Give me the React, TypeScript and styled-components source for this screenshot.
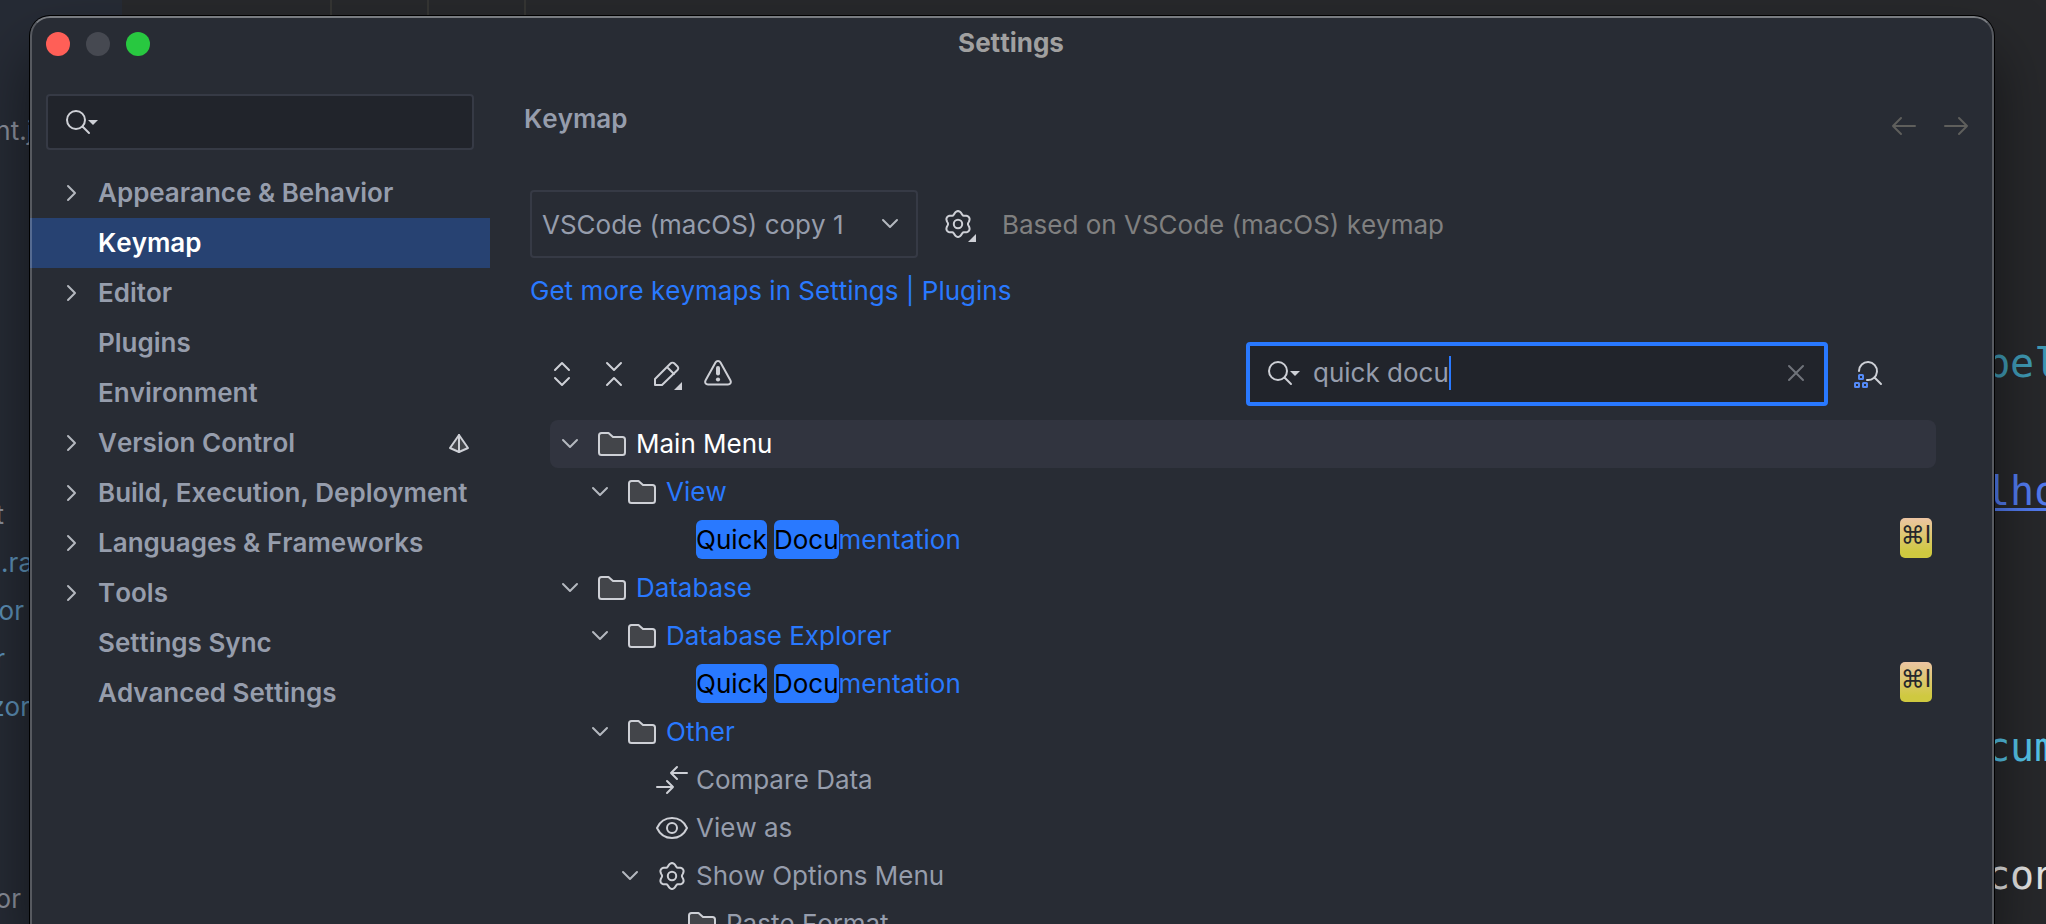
import React from "react";
import styled, { createGlobalStyle } from "styled-components";

const GlobalStyle = createGlobalStyle`
  *, *::before, *::after { box-sizing: border-box; }
  body {
    margin: 0;
    background: #26282b;
    font-family: Inter, "Liberation Sans", sans-serif;
    font-optical-sizing: none;
    font-kerning: none;
    font-size: 26px;
    line-height: 32px;
  }
  button, input, select { font: inherit; color: inherit; font-kerning: none; }
`;

const color = {
  window: "#282c34",
  field: "#21242b",
  border: "#363a45",
  text: "#969dac",
  muted: "#808080",
  icon: "#ced0d6",
  accent: "#2979ff",
};

/* ---------- Desktop behind the dialog ---------- */

const Desktop = styled.div`
  position: relative;
  height: 100vh;
  overflow: hidden;
  display: flex;
`;

const ProjectPane = styled.div`
  width: 122px;
  padding-top: 107px;
  background: #262b35;
`;

const FileRow = styled.div<{ $end: number; $blue?: boolean }>`
  display: flex;
  justify-content: flex-end;
  width: ${(p) => p.$end}px;
  height: 48px;
  line-height: 48px;
  white-space: nowrap;
  color: ${(p) => (p.$blue ? "#5c8fb6" : "#8b909c")};
`;

const EditorPane = styled.div`
  flex: 1;
  display: flex;
  justify-content: space-between;
  background: #27282b;
`;

const Guides = styled.div`
  display: flex;
  padding-left: 113px;
`;

const Guide = styled.div`
  width: 97px;
  border-right: 2px solid #353533;
`;

const Code = styled.div`
  width: 60px;
  padding-top: 11px;
  overflow: hidden;
  font-family: "DejaVu Sans Mono", monospace;
  font-size: 40px;
  line-height: 64px;
`;

const CodeLine = styled.div<{ $color?: string; $link?: boolean }>`
  height: 64px;
  white-space: pre;
  color: ${(p) => p.$color ?? "#e4e4e4"};
  text-decoration: ${(p) => (p.$link ? "underline 3px" : "none")};
  text-underline-offset: 3px;
`;

/* ---------- Dialog ---------- */

const Dialog = styled.section`
  position: absolute;
  inset: 16px 52px 0 30px;
  display: flex;
  flex-direction: column;
  overflow: hidden;
  border-radius: 20px 20px 0 0;
  background: ${color.window};
  color: ${color.text};

  &::after {
    content: "";
    position: absolute;
    inset: 0;
    border: 2px solid rgba(255, 255, 255, 0.22);
    border-top-color: rgba(255, 255, 255, 0.38);
    border-bottom: 0;
    border-radius: inherit;
    pointer-events: none;
  }
`;

const DialogShadow = styled.div`
  position: absolute;
  inset: 16px 52px 0 30px;
  border-radius: 20px 20px 0 0;
  box-shadow: 0 0 0 1px #000, 0 36px 60px rgba(0, 0, 0, 0.5);
`;

const TitleBar = styled.header`
  display: grid;
  grid-template-columns: 1fr auto 1fr;
  align-items: center;
  height: 56px;
  flex: none;
  padding: 0 18px 0 16px;
`;

const Lights = styled.div`
  display: flex;
  gap: 16px;
`;

const Light = styled.button<{ $color: string }>`
  width: 24px;
  height: 24px;
  padding: 0;
  border: 0;
  border-radius: 50%;
  background: ${(p) => p.$color};
`;

const Title = styled.h1`
  margin: 0;
  padding-bottom: 2px;
  font-size: 26px;
  font-weight: 700;
  color: #a0a0a0;
`;

const Body = styled.div`
  display: flex;
  flex: 1;
  min-height: 0;
`;

const Sidebar = styled.nav`
  width: 460px;
  flex: none;
  padding-top: 22px;
`;

const SideSearch = styled.label`
  display: flex;
  align-items: center;
  height: 56px;
  margin: 0 16px 18px;
  padding: 0 16px;
  border: 2px solid ${color.border};
  border-radius: 4px;
  background: ${color.field};
`;

const SideInput = styled.input`
  flex: 1;
  min-width: 0;
  border: 0;
  outline: 0;
  background: none;
`;

const SideItem = styled.a<{ $active?: boolean }>`
  display: flex;
  align-items: center;
  height: 50px;
  padding: 0 15px 1px 18px;
  font-weight: 600;
  text-decoration: none;
  white-space: nowrap;
  color: ${(p) => (p.$active ? "#ffffff" : color.text)};
  background: ${(p) => (p.$active ? "#274272" : "none")};
`;

const SideLabel = styled.span`
  flex: 1;
`;

const Slot = styled.span`
  display: flex;
  justify-content: center;
  flex: none;
  width: 32px;
`;

const SideSlot = styled(Slot)`
  width: 44px;
  margin-right: 6px;
`;

const Main = styled.main`
  flex: 1;
  min-width: 0;
  padding: 28px 0 0 34px;
`;

const HeadRow = styled.div`
  display: flex;
  align-items: flex-start;
  justify-content: space-between;
  height: 90px;
  padding-right: 22px;
`;

const Heading = styled.h2`
  margin: 0;
  padding-top: 3px;
  font-size: 26px;
  font-weight: 600;
`;

const NavButtons = styled.div`
  display: flex;
  gap: 20px;
  padding-top: 10px;
`;

const IconButton = styled.button`
  display: flex;
  padding: 0;
  border: 0;
  background: none;

  svg {
    overflow: visible;
  }
`;

const SchemeRow = styled.div`
  display: flex;
  align-items: center;
  gap: 24px;
  padding-left: 6px;
`;

const SchemeBox = styled.div`
  display: grid;
  grid-template-columns: 1fr 56px;
  align-items: center;
  width: 388px;
  height: 68px;

  svg {
    grid-area: 1 / 2;
    justify-self: center;
    pointer-events: none;
  }
`;

const SchemeSelect = styled.select`
  grid-area: 1 / 1 / 2 / 3;
  height: 68px;
  padding: 2px 56px 0 10px;
  border: 2px solid ${color.border};
  border-radius: 4px;
  appearance: none;
  outline: 0;
  background: ${color.window};
`;

const BasedOn = styled.span`
  padding: 2px 0 0 4px;
  color: ${color.muted};
`;

const PluginLink = styled.a`
  display: block;
  width: max-content;
  margin: 17px 0 35px 6px;
  color: ${color.accent};
  text-decoration: none;
`;

const Toolbar = styled.div`
  display: flex;
  align-items: center;
  gap: 20px;
  padding: 0 110px 0 22px;
`;

const Finder = styled.label`
  display: flex;
  align-items: center;
  width: 582px;
  height: 64px;
  margin: 0 4px 0 auto;
  padding: 0 12px 2px 16px;
  border: 4px solid ${color.accent};
  border-radius: 4px;
  background: ${color.field};
`;

const FinderInput = styled.input`
  field-sizing: content;
  margin-left: 11px;
  padding: 0;
  border: 0;
  outline: 0;
  background: none;
`;

const Caret = styled.span`
  width: 2px;
  height: 34px;
  margin-right: auto;
  background: ${color.accent};
`;

const Tree = styled.ul`
  margin: 14px 58px 0 26px;
  padding: 0;
  list-style: none;
`;

const TreeRow = styled.li<{ $level: number; $active?: boolean; $tone?: string }>`
  display: flex;
  align-items: center;
  height: 48px;
  padding: 0 4px 0 ${(p) => 4 + p.$level * 30}px;
  border-radius: 8px;
  white-space: pre;
  color: ${(p) => p.$tone ?? color.text};
  background: ${(p) => (p.$active ? "#31343f" : "none")};
`;

const IconSlot = styled(Slot)`
  margin: 0 8px 0 10px;
`;

const Label = styled.span`
  flex: 1;
`;

const Hit = styled.mark`
  padding: 4px 0;
  border-radius: 6px;
  color: #000;
  background: ${color.accent};
`;

const Shortcut = styled.kbd`
  align-self: flex-start;
  width: 32px;
  height: 40px;
  margin-top: 2px;
  border-radius: 5px;
  text-align: center;
  font-family: Inter, "DejaVu Sans", sans-serif;
  font-size: 24px;
  line-height: 34px;
  color: #26282b;
  background: linear-gradient(#ecc5a3, #cfc940 85%);
`;

/* ---------- Icons ---------- */

type IconProps = { w?: number; h?: number; stroke?: string; children: React.ReactNode };

const Icon = ({ w = 32, h = 32, stroke = color.icon, children }: IconProps) => (
  <svg
    width={w}
    height={h}
    viewBox={`0 0 ${w} ${h}`}
    fill="none"
    stroke={stroke}
    strokeWidth="2"
    strokeLinecap="round"
    strokeLinejoin="round"
    aria-hidden="true"
  >
    {children}
  </svg>
);

const gearPath =
  "M" +
  Array.from({ length: 72 }, (_, i) => {
    const a = (i / 72) * Math.PI * 2;
    const wave = Math.cos(6 * a);
    const r = 11.5 + 1.5 * wave - 0.1 * Math.cos(12 * a);
    return `${(16 + r * Math.sin(a)).toFixed(2)} ${(16 - r * Math.cos(a)).toFixed(2)}`;
  }).join("L") +
  "Z";

const MenuCorner = () => <path d="M34 26V34H26Z" fill={color.icon} stroke="none" />;

const Gear = ({ menu = false }: { menu?: boolean }) => (
  <Icon>
    <path d={gearPath} />
    <circle cx="16" cy="16" r="4.200" />
    {menu && <MenuCorner />}
  </Icon>
);
const SearchMenu = () => (
  <Icon w={36}>
    <circle cx="12" cy="14" r="9" />
    <path d="M18.500 20.500L25 27" />
    <path d="M24 14H34L29 19Z" fill={color.icon} stroke="none" />
  </Icon>
);
const ChevronRight = () => (
  <Icon stroke="#b4b8bf">
    <path d="M14 9L21 16L14 23" />
  </Icon>
);
const ChevronDown = () => (
  <Icon stroke="#b4b8bf">
    <path d="M9 12L16 19L23 12" />
  </Icon>
);
const Folder = () => (
  <Icon>
    <path
      d="M3 7.500C3 6 4 5 5.500 5H12.500L17 9H26.500C28 9 29 10 29 11.500V24.500C29 26 28 27 26.500 27H5.500C4 27 3 26 3 24.500Z"
      fill="#43454a"
    />
  </Icon>
);
const ExpandAll = () => (
  <Icon>
    <path d="M9 12L16 5L23 12M9 20L16 27L23 20" />
  </Icon>
);
const CollapseAll = () => (
  <Icon>
    <path d="M9 5L16 12L23 5M9 27L16 20L23 27" />
  </Icon>
);
const Pencil = () => (
  <Icon>
    <path d="M5 27V21L20.500 5.500C21.500 4.500 23.500 4.500 24.500 5.500L27.500 8.500C28.500 9.500 28.500 11 27.500 12L12 27ZM17 9L24 16" />
    <path d="M32 24V32H24Z" fill={color.icon} stroke="none" />
  </Icon>
);
const Warning = () => (
  <Icon>
    <path d="M13.500 4.500C14.600 2.500 17.400 2.500 18.500 4.500L28.500 22.500C29.500 24.500 28.300 26.500 26 26.500H6C3.700 26.500 2.500 24.500 3.500 22.500Z" />
    <path d="M16 10V15.500" strokeWidth="4" />
    <circle cx="16" cy="21.500" r="2.100" fill={color.icon} stroke="none" />
  </Icon>
);
const Close = () => (
  <Icon stroke="#6f737a">
    <path d="M9 9L23 23M23 9L9 23" />
  </Icon>
);
const FindShortcut = () => (
  <Icon>
    <path d="M7 13A9 9 0 1 1 15 22M22.500 19.500L29 26" />
    <g stroke="#548af7" strokeLinejoin="miter">
      <rect x="7" y="17" width="4" height="4" rx="0.500" />
      <rect x="3" y="25" width="4" height="4" rx="0.500" />
      <rect x="11" y="25" width="4" height="4" rx="0.500" />
    </g>
  </Icon>
);
const ArrowLeft = () => (
  <Icon stroke="#5f5f5c">
    <path d="M27 16H5M13 8L5 16L13 24" />
  </Icon>
);
const ArrowRight = () => (
  <Icon stroke="#5f5f5c">
    <path d="M5 16H27M19 8L27 16L19 24" />
  </Icon>
);
const Diff = () => (
  <Icon>
    <path d="M31 9H15M21 3L15 9L21 15M1 23H17M11 17L17 23L11 29" />
  </Icon>
);
const Eye = () => (
  <Icon>
    <path d="M1 16C4 9.500 9.500 6 16 6S28 9.500 31 16C28 22.500 22.500 26 16 26S4 22.500 1 16Z" />
    <circle cx="16" cy="16" r="5" />
  </Icon>
);
const Scope = () => (
  <Icon>
    <path d="M16 8L25 21L16 25L7 21Z" fill="#43454a" />
    <path d="M16 8V25" />
  </Icon>
);

/* ---------- Content ---------- */

const files = [
  { row: 0, text: "nt.j", end: 33 },
  { row: 8, text: "t", end: 4 },
  { row: 9, text: ".ra", end: 33, blue: true },
  { row: 10, text: "or", end: 24, blue: true },
  { row: 11, text: "r", end: 5, blue: true },
  { row: 12, text: "zor", end: 30, blue: true },
  { row: 16, text: "or", end: 21 },
];

const codeLines: Record<number, { text: string; color?: string; link?: boolean }> = {
  5: { text: "bel", color: "#3f9ab5" },
  7: { text: "lho", color: "#527bf0", link: true },
  11: { text: "cum", color: "#55c4e8" },
  13: { text: "con" },
};

const sections = [
  { label: "Appearance & Behavior", parent: true },
  { label: "Keymap", active: true },
  { label: "Editor", parent: true },
  { label: "Plugins" },
  { label: "Environment" },
  { label: "Version Control", parent: true, scoped: true },
  { label: "Build, Execution, Deployment", parent: true },
  { label: "Languages & Frameworks", parent: true },
  { label: "Tools", parent: true },
  { label: "Settings Sync" },
  { label: "Advanced Settings" },
];

const QuickDoc = () => (
  <>
    <Hit>Quick</Hit> <Hit>Docu</Hit>mentation
  </>
);

type Node = {
  level: number;
  label: React.ReactNode;
  icon?: React.ReactNode;
  open?: boolean;
  active?: boolean;
  tone?: string;
  keys?: string;
};

const nodes: Node[] = [
  { level: 0, label: "Main Menu", icon: <Folder />, open: true, active: true, tone: "#ffffff" },
  { level: 1, label: "View", icon: <Folder />, open: true, tone: color.accent },
  { level: 2, label: <QuickDoc />, tone: color.accent, keys: "⌘I" },
  { level: 0, label: "Database", icon: <Folder />, open: true, tone: color.accent },
  { level: 1, label: "Database Explorer", icon: <Folder />, open: true, tone: color.accent },
  { level: 2, label: <QuickDoc />, tone: color.accent, keys: "⌘I" },
  { level: 1, label: "Other", icon: <Folder />, open: true, tone: color.accent },
  { level: 2, label: "Compare Data", icon: <Diff /> },
  { level: 2, label: "View as", icon: <Eye /> },
  { level: 2, label: "Show Options Menu", icon: <Gear />, open: true },
  { level: 3, label: "Paste Format", icon: <Folder /> },
];

export default function App() {
  return (
    <>
      <GlobalStyle />
      <Desktop>
        <ProjectPane>
          {Array.from({ length: 17 }, (_, i) => {
            const f = files.find((x) => x.row === i);
            return (
              <FileRow key={i} $end={f?.end ?? 0} $blue={f?.blue}>
                {f?.text}
              </FileRow>
            );
          })}
        </ProjectPane>
        <EditorPane>
          <Guides>
            <Guide />
            <Guide />
            <Guide />
          </Guides>
          <Code>
            {Array.from({ length: 14 }, (_, i) => (
              <CodeLine key={i} $color={codeLines[i]?.color} $link={codeLines[i]?.link}>
                {codeLines[i]?.text}
              </CodeLine>
            ))}
          </Code>
        </EditorPane>

        <DialogShadow />
        <Dialog aria-label="Settings">
          <TitleBar>
            <Lights>
              <Light $color="#ff5f57" aria-label="Close" />
              <Light $color="#464951" aria-label="Minimize" />
              <Light $color="#28c840" aria-label="Zoom" />
            </Lights>
            <Title>Settings</Title>
          </TitleBar>
          <Body>
            <Sidebar>
              <SideSearch>
                <SearchMenu />
                <SideInput type="text" aria-label="Search settings" />
              </SideSearch>
              {sections.map((s) => (
                <SideItem key={s.label} href="#" $active={s.active}>
                  <SideSlot>{s.parent && <ChevronRight />}</SideSlot>
                  <SideLabel>{s.label}</SideLabel>
                  {s.scoped && <Scope />}
                </SideItem>
              ))}
            </Sidebar>

            <Main>
              <HeadRow>
                <Heading>Keymap</Heading>
                <NavButtons>
                  <IconButton aria-label="Back">
                    <ArrowLeft />
                  </IconButton>
                  <IconButton aria-label="Forward">
                    <ArrowRight />
                  </IconButton>
                </NavButtons>
              </HeadRow>

              <SchemeRow>
                <SchemeBox>
                  <SchemeSelect aria-label="Keymap scheme">
                    <option>VSCode (macOS) copy 1</option>
                  </SchemeSelect>
                  <ChevronDown />
                </SchemeBox>
                <IconButton aria-label="Scheme actions">
                  <Gear menu />
                </IconButton>
                <BasedOn>Based on VSCode (macOS) keymap</BasedOn>
              </SchemeRow>
              <PluginLink href="#">Get more keymaps in Settings | Plugins</PluginLink>

              <Toolbar>
                <IconButton aria-label="Expand all">
                  <ExpandAll />
                </IconButton>
                <IconButton aria-label="Collapse all">
                  <CollapseAll />
                </IconButton>
                <IconButton aria-label="Edit shortcut">
                  <Pencil />
                </IconButton>
                <IconButton aria-label="Show conflicts">
                  <Warning />
                </IconButton>
                <Finder>
                  <SearchMenu />
                  <FinderInput type="text" aria-label="Search actions" defaultValue="quick docu" />
                  <Caret />
                  <IconButton aria-label="Clear">
                    <Close />
                  </IconButton>
                </Finder>
                <IconButton aria-label="Find by shortcut">
                  <FindShortcut />
                </IconButton>
              </Toolbar>

              <Tree>
                {nodes.map((n, i) => (
                  <TreeRow key={i} $level={n.level} $active={n.active} $tone={n.tone}>
                    <Slot>{n.open && <ChevronDown />}</Slot>
                    <IconSlot>{n.icon}</IconSlot>
                    <Label>{n.label}</Label>
                    {n.keys && <Shortcut>{n.keys}</Shortcut>}
                  </TreeRow>
                ))}
              </Tree>
            </Main>
          </Body>
        </Dialog>
      </Desktop>
    </>
  );
}
